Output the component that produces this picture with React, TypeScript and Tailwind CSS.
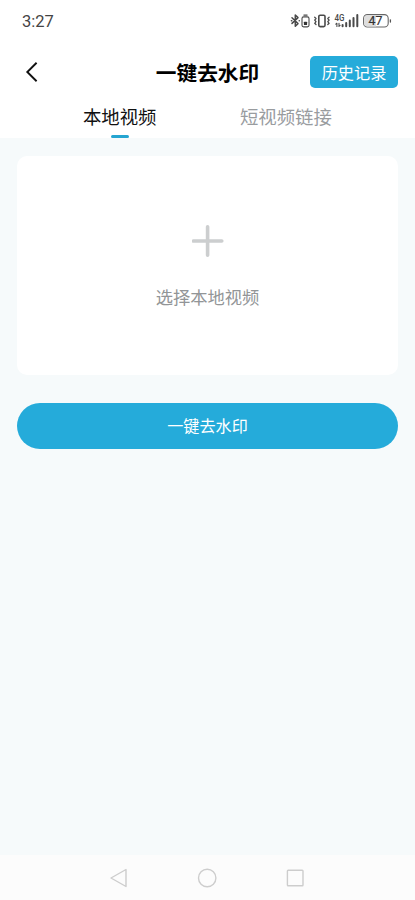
import { useState } from 'react'

const TABS = ['本地视频', '短视频链接']

function StatusIcons() {
  return (
    <svg
      className="h-[20px] w-[104px]"
      viewBox="290 10.6 104 20"
      fill="none"
      stroke="#4a4a4a"
      strokeLinecap="round"
      strokeLinejoin="round"
    >
      {/* bluetooth */}
      <path d="M292 17.4l6 5.8-2.7 2.6V14.6l2.7 2.6-6 5.8" strokeWidth="1.5" />
      <path d="M291.4 20.3h.4M299.2 20.3h.1" strokeWidth="1.5" />
      {/* device battery */}
      <rect x="302" y="16.5" width="7" height="10" rx="1.6" strokeWidth="1.1" />
      <path d="M303.9 14.7h3.2" strokeWidth="1.2" />
      <rect x="303.9" y="21.3" width="3.2" height="3.3" rx="0.6" fill="#333" stroke="none" />
      {/* vibrate */}
      <rect x="318.8" y="14.8" width="6.2" height="11.4" rx="1.3" strokeWidth="1.6" />
      <path
        d="M314.7 16.9l1.3 1.2-1.3 1.6 1.3 1.6-1.3 1.6 1.3 1.2M329.1 16.9l-1.3 1.2 1.3 1.6-1.3 1.6 1.3 1.6-1.3 1.2"
        strokeWidth="1.3"
      />
      {/* signal */}
      <text
        x="334.5"
        y="20.4"
        fontSize="8.6"
        fontWeight="500"
        fontFamily="Roboto, sans-serif"
        fill="#4a4a4a"
        stroke="none"
        textLength="10"
        lengthAdjust="spacingAndGlyphs"
      >
        4G
      </text>
      <path d="M336.9 26v-3.2l-1.1 1M339 22.8V26l1.1-1" strokeWidth="1.1" />
      <path
        d="M342.6 24.7v1.2M346.2 22.5v3.4M349.8 20v5.9M353.5 17.5v8.4M357.3 14.7v11.2"
        strokeWidth="2"
      />
      {/* battery */}
      <rect x="363.6" y="14.2" width="24.6" height="12.4" rx="3.8" fill="#fff" stroke="#666" strokeWidth="1.1" />
      <path d="M376 14.8h-8.6a3.2 3.2 0 0 0-3.2 3.2v4.8a3.2 3.2 0 0 0 3.2 3.2h8.6z" fill="#dedede" stroke="none" />
      <path d="M390.4 19.4v2.2" stroke="#555" strokeWidth="1.3" />
      <text
        x="375.4"
        y="24.7"
        fontSize="12.3"
        fontFamily="Roboto, sans-serif"
        textAnchor="middle"
        fill="#333"
        stroke="#333"
        strokeWidth="0.2"
      >
        47
      </text>
    </svg>
  )
}

export default function App() {
  const [active, setActive] = useState(0)

  return (
    <div className="flex h-[900px] w-full flex-col bg-[#f6fafb] font-['Noto_Sans_CJK_SC',sans-serif]">
      <header className="h-[138px] bg-white">
        <div className="flex h-[42px] items-center justify-between pr-[21px] pl-[22px]">
          <span className="pt-0.5 font-['Roboto',sans-serif] text-[16.5px] text-[#444]">3:27</span>
          <StatusIcons />
        </div>

        <div className="grid h-[60px] grid-cols-[1fr_auto_1fr] items-center pr-[17px] pl-[25px]">
          <button type="button" aria-label="返回">
            <svg className="h-5 w-3.5" viewBox="0 0 14 20" fill="none" stroke="#111" strokeWidth="1.9">
              <path d="M11.6 0.8L2.3 10l9.3 9.2" />
            </svg>
          </button>
          <h1 className="-ml-2 text-[20.7px] leading-none font-bold text-black">一键去水印</h1>
          <button
            type="button"
            className="h-8 w-[88px] justify-self-end rounded-[5px] bg-[#25abda] text-[16.2px] leading-none text-white"
          >
            历史记录
          </button>
        </div>

        <nav className="grid h-9 grid-cols-2 pr-[46px] pl-[36.6px]">
          {TABS.map((tab, i) => (
            <button
              key={tab}
              type="button"
              onClick={() => setActive(i)}
              className="flex flex-col items-center justify-between pt-1"
            >
              <span
                className={`text-[18.4px] leading-[20px] ${i === active ? 'text-[#111]' : 'text-[#999c9f]'}`}
              >
                {tab}
              </span>
              {i === active && <span className="h-[3.5px] w-[18px] rounded-full bg-[#25a5d1]" />}
            </button>
          ))}
        </nav>
      </header>

      <main className="flex flex-1 flex-col px-[17px] pt-[17.5px]">
        <button
          type="button"
          className="flex h-[219.5px] flex-col items-center rounded-[10px] bg-white pt-[69px]"
        >
          <svg className="size-8" viewBox="0 0 32 32" stroke="#cccecf" strokeWidth="3.6" strokeLinecap="round">
            <path d="M15.6 1.8v28.4M1.4 16h28.4" />
          </svg>
          <span className="mt-[30px] text-[17.3px] leading-[20px] text-[#929597]">选择本地视频</span>
        </button>

        <button
          type="button"
          className="mt-[27.5px] h-[46px] rounded-full bg-[#25abda] text-[16.1px] leading-none text-white"
        >
          一键去水印
        </button>
      </main>

      <footer className="flex h-[45px] items-center justify-center gap-[68px] bg-[#fcfcfc] pr-px">
        <svg className="size-5" viewBox="0 0 20 20" fill="none" stroke="#cdcdcd" strokeWidth="1.4" strokeLinejoin="round">
          <path d="M17 1.5v17L2 10z" />
        </svg>
        <svg className="size-5" viewBox="0 0 20 20" fill="none" stroke="#cdcdcd" strokeWidth="1.4">
          <circle cx="10.2" cy="10" r="8.7" />
        </svg>
        <svg className="size-5" viewBox="0 0 20 20" fill="none" stroke="#cdcdcd" strokeWidth="1.4">
          <rect x="2.4" y="2.2" width="15.6" height="15.6" rx="0.8" />
        </svg>
      </footer>
    </div>
  )
}
